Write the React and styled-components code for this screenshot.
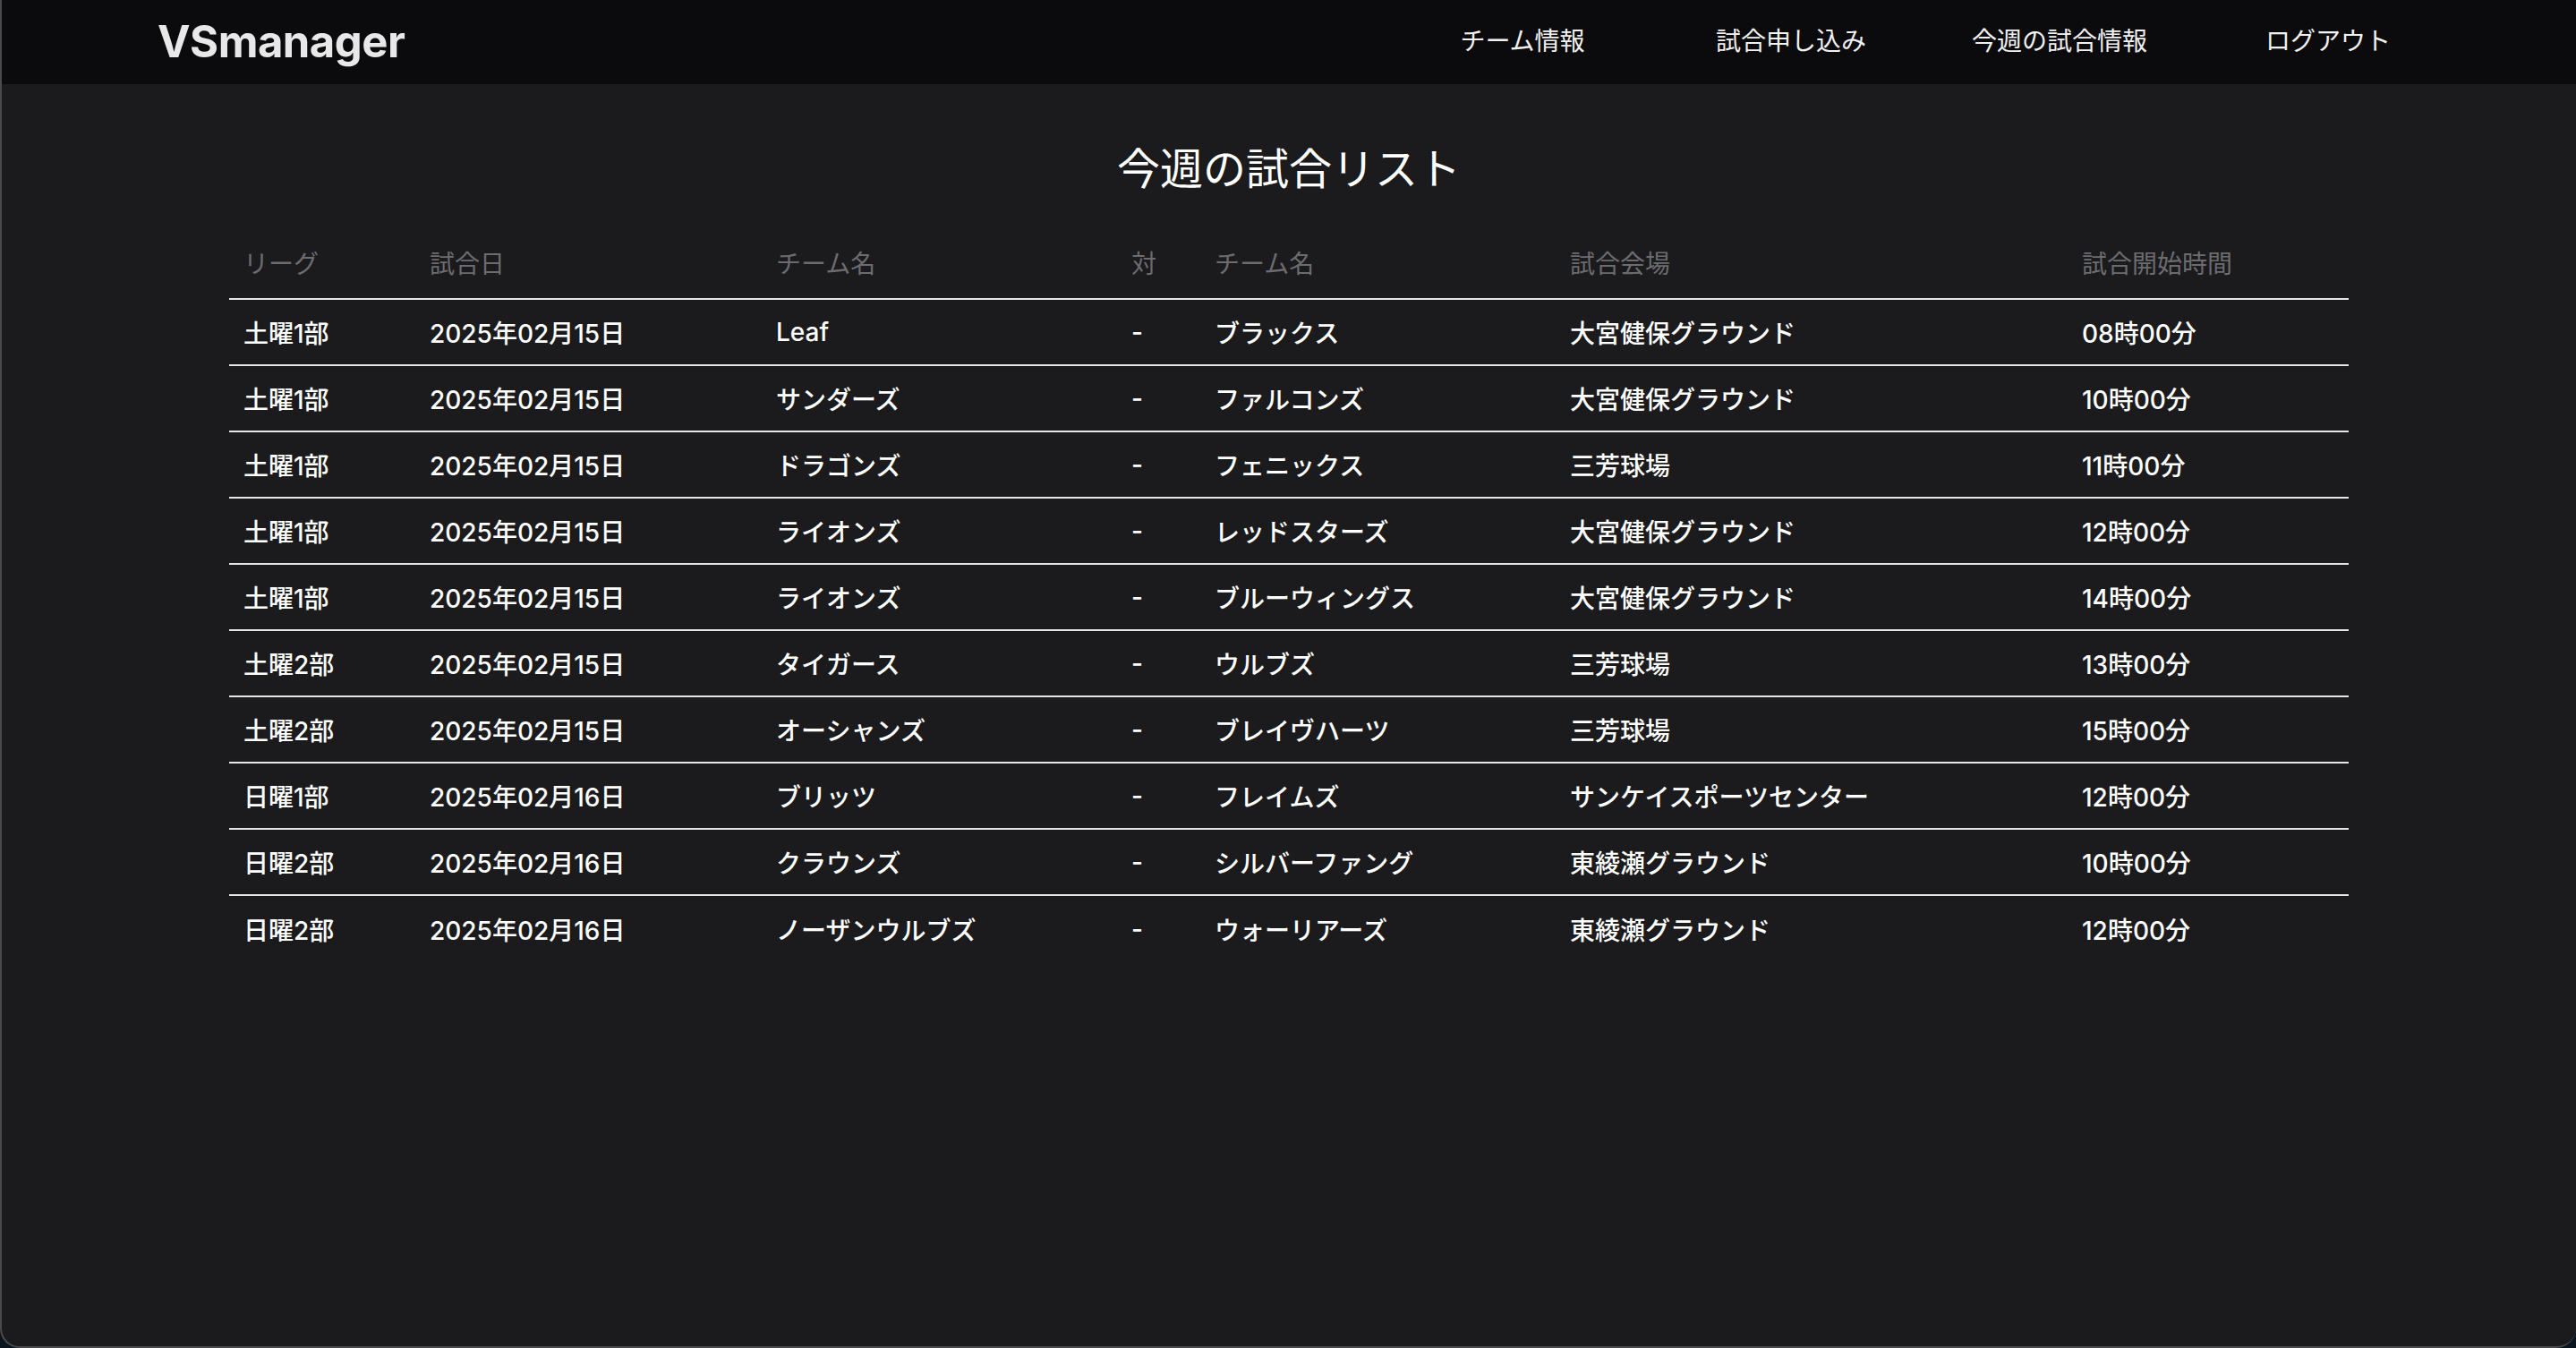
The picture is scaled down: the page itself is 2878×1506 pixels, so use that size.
import React from "react";
import styled, { createGlobalStyle } from "styled-components";

const GlobalStyle = createGlobalStyle`
  html, body {
    margin: 0;
    padding: 0;
    background: #0a1520;
  }
  * {
    box-sizing: border-box;
  }
`;

const Window = styled.div`
  width: 2878px;
  height: 1506px;
  background: #1b1b1d;
  border-left: 2px solid #4a4a4d;
  border-bottom: 2px solid #4a4a4d;
  border-bottom-left-radius: 22px;
  border-bottom-right-radius: 22px;
  overflow: hidden;
  font-family: Inter, "Noto Sans CJK JP", sans-serif;
  color: #ffffff;
`;

const NavBar = styled.header`
  height: 94px;
  background: #0b0b0d;
  display: flex;
  align-items: center;
  justify-content: space-between;
  padding: 0 127px 0 174px;
`;

const Logo = styled.div`
  font-size: 49px;
  font-weight: 700;
  color: #e8e8e8;
  letter-spacing: -0.5px;
  margin-top: -2px;
`;

const NavList = styled.nav`
  display: flex;
`;

const NavItem = styled.a`
  width: 300px;
  text-align: center;
  font-size: 28px;
  color: #f2f2f2;
  text-decoration: none;
  margin-top: -6px;
`;

const Main = styled.main`
  display: flex;
  flex-direction: column;
  align-items: center;
  padding-top: 60px;
`;

const Title = styled.h1`
  margin: 0;
  font-size: 48px;
  font-weight: 400;
  line-height: 70px;
  color: #ffffff;
`;

const Table = styled.table`
  width: 2368px;
  margin-top: 34px;
  border-collapse: collapse;
  table-layout: fixed;
`;

const HeadCell = styled.th`
  text-align: left;
  font-weight: 400;
  font-size: 28px;
  color: #6c6c70;
  height: 76px;
  padding: 0 16px 6px;
  border-bottom: 2px solid #e6e6e6;
`;

const Row = styled.tr`
  & + & td {
    border-top: 2px solid #e6e6e6;
  }
`;

const Cell = styled.td`
  font-size: 28px;
  font-weight: 500;
  height: 74px;
  padding: 0 16px;
  color: #ffffff;
  white-space: nowrap;
`;

const columns = [
  { label: "リーグ", width: 208 },
  { label: "試合日", width: 387 },
  { label: "チーム名", width: 397 },
  { label: "対", width: 93 },
  { label: "チーム名", width: 397 },
  { label: "試合会場", width: 572 },
  { label: "試合開始時間", width: 314 },
];

const matches = [
  ["土曜1部", "2025年02月15日", "Leaf", "ブラックス", "大宮健保グラウンド", "08時00分"],
  ["土曜1部", "2025年02月15日", "サンダーズ", "ファルコンズ", "大宮健保グラウンド", "10時00分"],
  ["土曜1部", "2025年02月15日", "ドラゴンズ", "フェニックス", "三芳球場", "11時00分"],
  ["土曜1部", "2025年02月15日", "ライオンズ", "レッドスターズ", "大宮健保グラウンド", "12時00分"],
  ["土曜1部", "2025年02月15日", "ライオンズ", "ブルーウィングス", "大宮健保グラウンド", "14時00分"],
  ["土曜2部", "2025年02月15日", "タイガース", "ウルブズ", "三芳球場", "13時00分"],
  ["土曜2部", "2025年02月15日", "オーシャンズ", "ブレイヴハーツ", "三芳球場", "15時00分"],
  ["日曜1部", "2025年02月16日", "ブリッツ", "フレイムズ", "サンケイスポーツセンター", "12時00分"],
  ["日曜2部", "2025年02月16日", "クラウンズ", "シルバーファング", "東綾瀬グラウンド", "10時00分"],
  ["日曜2部", "2025年02月16日", "ノーザンウルブズ", "ウォーリアーズ", "東綾瀬グラウンド", "12時00分"],
];

function App() {
  return (
    <>
      <GlobalStyle />
      <Window>
        <NavBar>
          <Logo>VSmanager</Logo>
          <NavList>
            <NavItem>チーム情報</NavItem>
            <NavItem>試合申し込み</NavItem>
            <NavItem>今週の試合情報</NavItem>
            <NavItem>ログアウト</NavItem>
          </NavList>
        </NavBar>
        <Main>
          <Title>今週の試合リスト</Title>
          <Table>
            <colgroup>
              {columns.map((c, i) => (
                <col key={i} style={{ width: c.width }} />
              ))}
            </colgroup>
            <thead>
              <tr>
                {columns.map((c, i) => (
                  <HeadCell key={i}>{c.label}</HeadCell>
                ))}
              </tr>
            </thead>
            <tbody>
              {matches.map((m, i) => (
                <Row key={i}>
                  <Cell>{m[0]}</Cell>
                  <Cell>{m[1]}</Cell>
                  <Cell>{m[2]}</Cell>
                  <Cell>-</Cell>
                  <Cell>{m[3]}</Cell>
                  <Cell>{m[4]}</Cell>
                  <Cell>{m[5]}</Cell>
                </Row>
              ))}
            </tbody>
          </Table>
        </Main>
      </Window>
    </>
  );
}

export default App;
